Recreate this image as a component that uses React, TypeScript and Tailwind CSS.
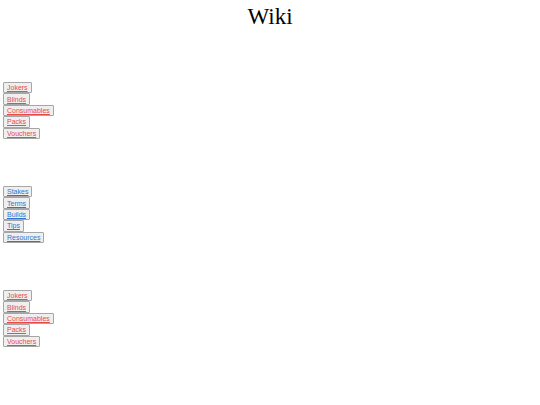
const jokerPages = ['Jokers', 'Blinds', 'Consumables', 'Packs', 'Vouchers'];
const guidePages = ['Stakes', 'Terms', 'Builds', 'Tips', 'Resources'];

type LinkGroupProps = {
  pages: string[];
  color: string;
};

function LinkGroup({ pages, color }: LinkGroupProps) {
  return (
    <ul className="grid h-[57px] auto-rows-fr justify-items-start">
      {pages.map((page) => (
        <li key={page} className="flex">
          <button
            type="button"
            className={`flex items-center rounded-[1px] border border-[#a6a6a6] bg-[#efefef] px-[3px] text-[7px] leading-none underline ${color}`}
          >
            {page}
          </button>
        </li>
      ))}
    </ul>
  );
}

export default function App() {
  return (
    <main className="font-['Liberation_Sans',Arial,sans-serif]">
      <h1 className="pt-1 text-center font-['Liberation_Serif','Times_New_Roman',serif] text-[23px] leading-[26px] text-black">
        Wiki
      </h1>
      <nav className="mt-[52px] flex flex-col gap-[47px] pl-[3px]">
        <LinkGroup pages={jokerPages} color="text-[#e84a4a]" />
        <LinkGroup pages={guidePages} color="text-[#2f74d0]" />
        <LinkGroup pages={jokerPages} color="text-[#e84a4a]" />
      </nav>
    </main>
  );
}
